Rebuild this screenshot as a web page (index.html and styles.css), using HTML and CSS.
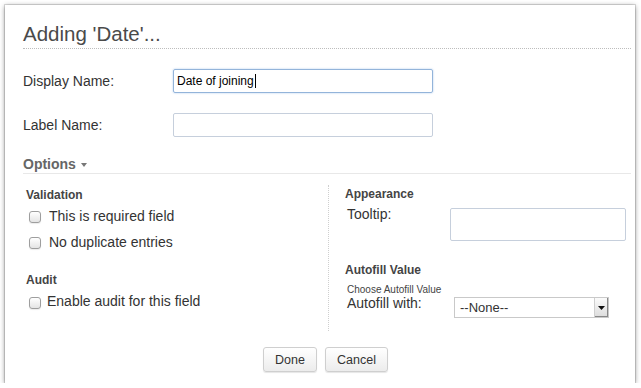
FILE: index.html
```html
<!DOCTYPE html>
<html>
<head>
<meta charset="utf-8">
<link rel="stylesheet" href="styles.css">
</head>
<body>
<div class="dialog">
  <h1 class="title">Adding 'Date'...</h1>

  <div class="row first">
    <label class="row-label">Display Name:</label>
    <div class="input focused"><span>Date of joining</span><span class="caret"></span></div>
  </div>
  <div class="row second">
    <label class="row-label">Label Name:</label>
    <div class="input"></div>
  </div>

  <div class="options">Options <span class="tri"></span></div>

  <div class="columns">
    <div class="col left">
      <div class="heading">Validation</div>
      <label class="check first-check"><input type="checkbox"><span>This is required field</span></label>
      <label class="check second-check"><input type="checkbox"><span>No duplicate entries</span></label>
      <div class="heading audit">Audit</div>
      <label class="check audit-check"><input type="checkbox"><span>Enable audit for this field</span></label>
    </div>
    <div class="col right">
      <div class="heading appear">Appearance</div>
      <div class="frow tooltip-row">
        <span class="flabel tip-label">Tooltip:</span>
        <div class="textarea"></div>
      </div>
      <div class="heading autofill">Autofill Value</div>
      <div class="hint">Choose Autofill Value</div>
      <div class="frow autofill-row">
        <span class="flabel fill-label">Autofill with:</span>
        <div class="select"><span class="select-text">--None--</span><span class="select-arrow"><svg width="7" height="4" viewBox="0 0 7 4"><path d="M0 0H7L3.5 4Z" fill="#111"/></svg></span></div>
      </div>
    </div>
  </div>

  <div class="buttons">
    <button class="btn done">Done</button>
    <button class="btn cancel">Cancel</button>
  </div>
</div>
</body>
</html>
```
FILE: styles.css
```css
html, body {
  margin: 0;
  padding: 0;
  background: #fff;
}
body {
  font-family: "Liberation Sans", Arial, sans-serif;
  color: #333;
}
.dialog {
  margin: 5px 0 0 5px;
  width: 630px;
  height: 378px;
  box-sizing: border-box;
  padding: 0 4px 0 18px;
  background: #fff;
  box-shadow: 0 0 0 1px rgba(0,0,0,0.12), 0 1px 5px rgba(0,0,0,0.45);
}
.title {
  margin: 0;
  padding: 16px 0 1px 0;
  font-size: 20.5px;
  line-height: 26px;
  font-weight: normal;
  color: #4a4a4a;
  border-bottom: 1px dotted #bdbdbd;
}
.row {
  display: flex;
  align-items: center;
  height: 24px;
}
.row.first { margin-top: 20px; }
.row.second { margin-top: 20px; }
.row-label {
  width: 150px;
  font-size: 14px;
  color: #333;
}
.input {
  width: 260px;
  height: 24px;
  box-sizing: border-box;
  border: 1px solid #c6cfdc;
  border-radius: 2px;
  padding: 0 3px;
  font-size: 12px;
  color: #000;
  display: flex;
  align-items: center;
}
.input.focused {
  border-color: #93b4da;
  box-shadow: 0 0 2px rgba(110,160,220,0.6);
}
.caret {
  display: inline-block;
  width: 1px;
  height: 14px;
  background: #000;
  margin-left: 1px;
}
.options {
  margin-top: 19px;
  font-size: 14px;
  line-height: 16px;
  font-weight: bold;
  color: #666;
  padding-bottom: 1px;
  border-bottom: 1px solid #e8e8e8;
  display: flex;
  align-items: center;
}
.tri {
  display: inline-block;
  margin-left: 5px;
  margin-top: 2px;
  width: 0;
  height: 0;
  border-left: 3.5px solid transparent;
  border-right: 3.5px solid transparent;
  border-top: 4px solid #777;
}
.columns {
  display: flex;
  margin-top: 11px;
  height: 146px;
}
.col.left {
  width: 305px;
  box-sizing: border-box;
  padding-left: 3px;
  padding-top: 3px;
}
.col.right {
  flex: 1;
  border-left: 1px dotted #cfcfcf;
  padding-left: 16px;
  padding-top: 2px;
}
.heading {
  font-size: 12px;
  line-height: 14px;
  font-weight: bold;
  color: #444;
}
.check {
  display: flex;
  align-items: center;
  height: 18px;
  font-size: 14px;
  line-height: 18px;
  color: #333;
}
.check input {
  -webkit-appearance: none;
  appearance: none;
  width: 12px;
  height: 12px;
  margin: 2px 8px 0 3px;
  box-sizing: border-box;
  border: 1px solid #9e9e9e;
  border-radius: 3px;
  background: linear-gradient(#ffffff, #e4e4e4);
  box-shadow: 0 1px 1px rgba(0,0,0,0.08);
}
.first-check { margin-top: 5px; }
.second-check { margin-top: 8px; }
.heading.audit { margin-top: 22px; }
.audit-check { margin-top: 5px; }
.audit-check input { margin-left: 3px; margin-right: 6px; margin-top: 4px; }
.frow {
  display: flex;
  align-items: flex-start;
}
.flabel {
  font-size: 14px;
  line-height: 18px;
  color: #333;
  padding-left: 2px;
  box-sizing: border-box;
}
.tooltip-row { margin-top: 4px; }
.tip-label { width: 105px; }
.textarea {
  margin-top: 3px;
  width: 176px;
  height: 33px;
  box-sizing: border-box;
  border: 1px solid #c6cfdc;
  border-radius: 2px;
}
.heading.autofill { margin-top: 22px; }
.hint {
  margin-top: 7px;
  font-size: 10px;
  line-height: 12px;
  color: #444;
  padding-left: 2px;
}
.autofill-row { margin-top: -2px; }
.fill-label { width: 109px; }
.select {
  margin-top: 3px;
  width: 155px;
  height: 21px;
  box-sizing: border-box;
  border: 1px solid #c9c9c9;
  display: flex;
  align-items: center;
  justify-content: space-between;
  background: #fff;
}
.select-text {
  padding-left: 5px;
  font-size: 13px;
  color: #333;
}
.select-arrow {
  width: 14px;
  height: 19px;
  box-sizing: border-box;
  border-left: 1px solid #cfcfcf;
  background: linear-gradient(#fbfbfb, #dcdcdc);
  display: flex;
  align-items: center;
  justify-content: center;
  box-shadow: inset 0 -1px 0 #888, inset -1px 0 0 #888;
}
.buttons {
  display: flex;
  justify-content: center;
  gap: 8px;
  margin-top: 16px;
  padding-right: 3px;
}
.btn {
  height: 25px;
  box-sizing: border-box;
  border: 1px solid #cfcfcf;
  border-radius: 3px;
  background: linear-gradient(#ffffff, #ececec);
  box-shadow: 0 1px 1px rgba(0,0,0,0.1);
  font-family: "Liberation Sans", Arial, sans-serif;
  font-size: 12.5px;
  color: #333;
  padding: 0;
}
.btn.done { width: 54px; }
.btn.cancel { width: 63px; }
```
